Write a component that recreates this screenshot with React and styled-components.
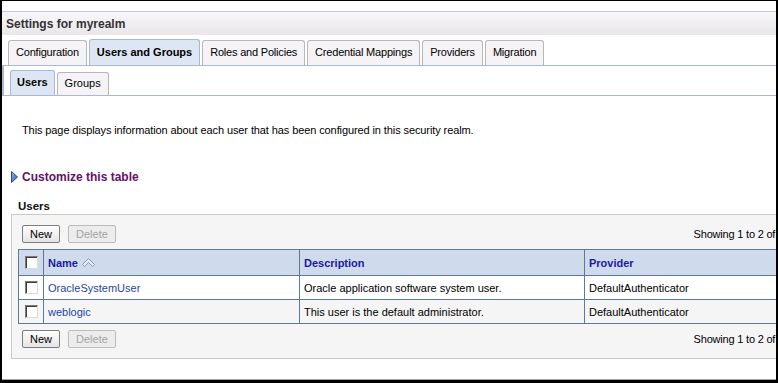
import React from "react";
import styled, { createGlobalStyle } from "styled-components";

const GlobalStyle = createGlobalStyle`
  html, body {
    margin: 0;
    padding: 0;
    background: #fff;
  }
  body {
    font-family: "Liberation Sans", Arial, sans-serif;
    font-size: 11px;
    color: #000;
    overflow: hidden;
  }
`;

const Frame = styled.div`
  width: 778px;
  height: 383px;
  box-sizing: border-box;
  border-style: solid;
  border-color: #000;
  border-width: 1px 2px 3px 2px;
  box-shadow: inset 0 -1px 0 #a4a4a4;
  overflow: hidden;
  background: #fff;
`;

const Page = styled.div`
  width: 860px;
`;

const TopStrip = styled.div`
  height: 10px;
`;

const TitleBar = styled.div`
  height: 22px;
  padding: 1px 0 0 4px;
  border-top: 1px solid #c9c8d0;
  background: linear-gradient(#f8f7f9, #e9e6ea);
  font-size: 12px;
  font-weight: bold;
  line-height: 22px;
  color: #333;
`;

const TabBar = styled.div`
  display: flex;
  align-items: flex-end;
  gap: 2px;
  padding: 4px 0 0 6px;
  border-bottom: 1px solid #a6bbd2;
`;

const Tab = styled.div`
  box-sizing: border-box;
  height: ${(p) => (p.$active ? 26 : 25)}px;
  padding: 0 7px;
  border: 1px solid ${(p) => (p.$active ? "#a3bad6" : "#b9b6b9")};
  border-bottom: none;
  border-radius: 3px 3px 0 0;
  background: ${(p) => (p.$active ? "#dde6f2" : "#f6f3f6")};
  font-weight: ${(p) => (p.$active ? "bold" : "normal")};
  letter-spacing: ${(p) => (p.$active ? 0 : -0.2)}px;
  line-height: ${(p) => (p.$active ? 24 : 23)}px;
  white-space: nowrap;
`;

const SubTabBar = styled.div`
  display: flex;
  align-items: flex-end;
  gap: 2px;
  height: 29px;
  padding-left: 6px;
  border-left: 2px solid #a6bbd2;
  border-bottom: 1px solid #a6bbd2;
`;

const SubTab = styled(Tab)`
  height: ${(p) => (p.$active ? 25 : 23)}px;
  padding: 0 ${(p) => (p.$active ? 6 : 7)}px;
  letter-spacing: 0;
  line-height: ${(p) => (p.$active ? 23 : 20)}px;
`;

const Body = styled.div`
  padding-left: 9px;
`;

const Intro = styled.p`
  margin: 27px 0 0 11px;
  line-height: 14px;
  letter-spacing: -0.1px;
`;

const Customize = styled.div`
  display: flex;
  align-items: center;
  gap: 4px;
  height: 16px;
  margin-top: 32px;
  font-size: 12px;
  font-weight: bold;
  color: #66106b;
`;

const SectionTitle = styled.div`
  margin: 14px 0 0 7px;
  line-height: 14px;
  font-size: 11.5px;
  font-weight: bold;
  color: #111;
`;

const Panel = styled.div`
  width: 774px;
  margin-top: 1px;
  padding: 10px 6px;
  border: 1px solid #c9c9c9;
  background: #f5f5f5;
`;

const Toolbar = styled.div`
  display: flex;
  align-items: center;
  justify-content: space-between;
  height: 18px;
  padding: 0 8px 0 4px;
`;

const Buttons = styled.div`
  display: flex;
  gap: 8px;
`;

const Button = styled.button`
  box-sizing: border-box;
  height: 18px;
  padding: 0 7px;
  border: 1px solid ${(p) => (p.disabled ? "#bcbcbc" : "#7d7d7d")};
  border-radius: 2px;
  background: ${(p) =>
    p.disabled ? "#ececec" : "linear-gradient(#ffffff, #e4e4e4)"};
  font-family: inherit;
  font-size: 11px;
  line-height: 16px;
  color: ${(p) => (p.disabled ? "#a3a3a3" : "#000")};
`;

const Pager = styled.div`
  white-space: nowrap;
  letter-spacing: -0.2px;
`;

const Grid = styled.table`
  width: 774px;
  margin: 6px 0;
  border-collapse: collapse;
  table-layout: fixed;
  background: #fff;
`;

const Col = styled.col`
  width: ${(p) => p.$w}px;
`;

const HeadCell = styled.th`
  height: 25px;
  padding: 0 4px;
  border: 1px solid #5e7a95;
  background: #cfdbed;
  color: #1a1aa0;
  font-weight: bold;
  text-align: ${(p) => (p.$center ? "center" : "left")};
  white-space: nowrap;
`;

const Row = styled.tr`
  background: ${(p) => (p.$alt ? "#f5f5f5" : "#fff")};
`;

const Cell = styled.td`
  height: 23px;
  padding: 0 4px;
  border: 1px solid #5e7a95;
  text-align: ${(p) => (p.$center ? "center" : "left")};
  white-space: nowrap;
`;

const Link = styled.a`
  color: #1d47a8;
  text-decoration: none;
`;

const HeadLabel = styled.span`
  display: inline-flex;
  align-items: center;
  gap: 4px;
`;

const Checkbox = styled.span`
  display: inline-block;
  box-sizing: border-box;
  width: 13px;
  height: 13px;
  vertical-align: middle;
  border: 1px solid;
  border-color: #7a7a7a #dcdcdc #dcdcdc #7a7a7a;
  box-shadow: inset 1px 1px 0 #3f3f3f;
  background: #fff;
`;

const Arrow = () => (
  <svg width="7" height="12" viewBox="0 0 7 12">
    <defs>
      <linearGradient id="arrowFill" x1="0" y1="0" x2="1" y2="1">
        <stop offset="0" stopColor="#8fb4ea" />
        <stop offset="1" stopColor="#2c5cb4" />
      </linearGradient>
    </defs>
    <polygon points="0.5,0.5 6.5,6 0.5,11.5" fill="url(#arrowFill)" stroke="#2a4a8a" />
  </svg>
);

const SortIcon = () => (
  <svg width="13" height="10" viewBox="0 0 13 10">
    <polygon
      points="0.5,6.5 6.5,0.5 12.5,6.5 10.5,8.5 6.5,4.5 2.5,8.5"
      fill="#e6ecf5"
      stroke="#8898b0"
    />
  </svg>
);

const tabs = [
  "Configuration",
  "Users and Groups",
  "Roles and Policies",
  "Credential Mappings",
  "Providers",
  "Migration",
];

const users = [
  {
    name: "OracleSystemUser",
    description: "Oracle application software system user.",
    provider: "DefaultAuthenticator",
  },
  {
    name: "weblogic",
    description: "This user is the default administrator.",
    provider: "DefaultAuthenticator",
  },
];

function TableToolbar() {
  return (
    <Toolbar>
      <Buttons>
        <Button type="button">New</Button>
        <Button type="button" disabled>
          Delete
        </Button>
      </Buttons>
      <Pager>Showing 1 to 2 of 2</Pager>
    </Toolbar>
  );
}

export default function App() {
  return (
    <Frame>
      <GlobalStyle />
      <Page>
        <TopStrip />
        <TitleBar>Settings for myrealm</TitleBar>
        <TabBar>
          {tabs.map((t) => (
            <Tab key={t} $active={t === "Users and Groups"}>
              {t}
            </Tab>
          ))}
        </TabBar>
        <SubTabBar>
          <SubTab $active>Users</SubTab>
          <SubTab>Groups</SubTab>
        </SubTabBar>
        <Body>
          <Intro>
            This page displays information about each user that has been
            configured in this security realm.
          </Intro>
          <Customize>
            <Arrow />
            Customize this table
          </Customize>
          <SectionTitle>Users</SectionTitle>
          <Panel>
            <TableToolbar />
            <Grid>
              <colgroup>
                <Col $w={25} />
                <Col $w={256} />
                <Col $w={285} />
                <Col $w={208} />
              </colgroup>
              <thead>
                <tr>
                  <HeadCell $center>
                    <Checkbox />
                  </HeadCell>
                  <HeadCell>
                    <HeadLabel>
                      Name <SortIcon />
                    </HeadLabel>
                  </HeadCell>
                  <HeadCell>Description</HeadCell>
                  <HeadCell>Provider</HeadCell>
                </tr>
              </thead>
              <tbody>
                {users.map((u, i) => (
                  <Row key={u.name} $alt={i % 2 === 1}>
                    <Cell $center>
                      <Checkbox />
                    </Cell>
                    <Cell>
                      <Link href="#">{u.name}</Link>
                    </Cell>
                    <Cell>{u.description}</Cell>
                    <Cell>{u.provider}</Cell>
                  </Row>
                ))}
              </tbody>
            </Grid>
            <TableToolbar />
          </Panel>
        </Body>
      </Page>
    </Frame>
  );
}
